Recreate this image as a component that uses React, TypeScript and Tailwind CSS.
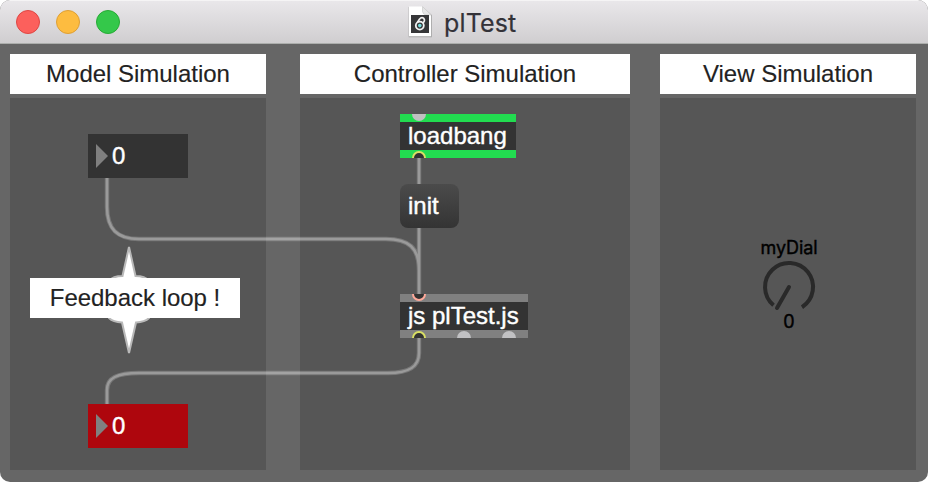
import type { ReactNode } from "react";
import clsx from "clsx";

const trafficLights = [
  "bg-[#fc605c] border-[#de4643]",
  "bg-[#fdbc40] border-[#de9f34]",
  "bg-[#34c84a] border-[#27aa35]",
];

const panels = [
  { title: "Model Simulation", width: "w-64" },
  { title: "Controller Simulation", width: "w-[330px]" },
  { title: "View Simulation", width: "w-64" },
];

// One combined path, so cords that merge don't add up their opacity
const wires = [
  "M107 178V207C107 229 117 239 139 239H386C409 239 419 248 419 270V294",
  "M419 158V184M419 228V294",
  "M419 338V353C419 367 409 373 388 373H139C117 373 107 378 107 390V404",
].join("");

const PatchIcon = () => (
  <svg className="h-8 w-6 shrink-0" viewBox="0 0 24 32" fill="none">
    <path d="M.7 1H15L23.8 9V31.2H.7Z" fill="#a4a4a4" />
    <path d="M1 .5H14.5L23 9V30.3H1Z" fill="#fff" />
    <path d="M14.5 .5V5.5Q15 8.5 18 9H23Z" fill="#e6e6e6" stroke="#c4c4c4" strokeWidth=".6" />
    <path d="M3 9H21V27H3Z" fill="#363638" />
    <circle cx="11.8" cy="19.6" r="4" stroke="#f2f2f2" strokeWidth="1.8" />
    <path d="M9.2 16.6L11.4 13.2Q13.6 10.6 15.8 12.4Q17.6 15 14.6 17" stroke="#f2f2f2" strokeWidth="1.7" />
    <circle cx="11.8" cy="19.6" r="1.8" fill="#77dedf" />
  </svg>
);

const TitleBar = () => (
  <header className="relative flex h-11 items-center border-t border-b border-t-[#f5f4f5] border-b-[#acaeac] bg-linear-to-b from-[#e9e7ea] to-[#d0ced0] pl-4">
    <div className="flex gap-4">
      {trafficLights.map((color) => (
        <span key={color} className={clsx("size-6 rounded-full border", color)} />
      ))}
    </div>
    <div className="absolute inset-x-0 -top-px flex h-11 items-center gap-3 pl-[408px]">
      <PatchIcon />
      <span className="mt-0.5 [font-family:Inter,'Liberation_Sans',sans-serif] text-[25px] leading-none tracking-[0.15px] text-[#333238] [-webkit-text-stroke:0.2px]">
        plTest
      </span>
    </div>
  </header>
);

const Comment = ({ children, className }: { children: ReactNode; className?: string }) => (
  <div
    className={clsx(
      "flex h-10 items-center justify-center bg-white text-2xl tracking-[-0.02px] text-[#222] [-webkit-text-stroke:0.15px]",
      className,
    )}
  >
    {children}
  </div>
);

const NumberBox = ({ className }: { className: string }) => (
  <div className={clsx("absolute left-[88px] flex h-11 w-[100px] items-center gap-1 pl-2", className)}>
    <svg className="h-6 w-3" viewBox="0 0 12 24">
      <path d="M0 0L12 12L0 24Z" fill="#808080" />
    </svg>
    <span>0</span>
  </div>
);

// Half-round connection point sitting on the rim of an object box
const Port = ({ cx, inlet, color, filled }: { cx: number; inlet?: boolean; color: string; filled?: boolean }) => {
  const y = inlet ? 0 : 44;
  const sweep = inlet ? 0 : 1;
  return filled ? (
    <path d={`M${cx - 7} ${y}A7 7 0 0 ${sweep} ${cx + 7} ${y}Z`} fill={color} />
  ) : (
    <path d={`M${cx - 6} ${y}A6 6 0 0 ${sweep} ${cx + 6} ${y}`} fill="#333" stroke={color} strokeWidth="2" />
  );
};

const ObjectBox = ({ className, label, children }: { className: string; label: string; children: ReactNode }) => (
  <div className={clsx("absolute left-[400px] h-11 py-2", className)}>
    <div className="flex h-7 items-center bg-[#333] pl-2 whitespace-nowrap">{label}</div>
    <svg className="absolute inset-0 h-11 w-full">{children}</svg>
  </div>
);

const Wires = () => (
  <svg className="absolute inset-0 h-full w-full" viewBox="0 0 928 482" fill="none">
    <path d={wires} stroke="#fff" strokeOpacity=".2" strokeWidth="4.5" />
    <path d={wires} stroke="#fff" strokeOpacity=".26" strokeWidth="2.5" />
  </svg>
);

const FeedbackMarker = () => (
  <svg className="absolute top-[245px] left-[99px] h-[110px] w-[60px]" viewBox="0 0 60 110">
    <path
      d="M30 2L36.5 31Q46 31 50 36V73Q46 77 37 77.5L30 108L23 77.5Q14 77 10 73V36Q14 31 23.5 31Z"
      fill="#fff"
      stroke="#b9b9b9"
      strokeWidth="2"
    />
  </svg>
);

const Dial = () => (
  <div className="absolute top-[238px] left-[749px] flex w-20 flex-col items-center [font-family:Inter,'Liberation_Sans',sans-serif] text-lg leading-5 text-black [-webkit-text-stroke:0.4px]">
    <span className="tracking-[-0.1px]">myDial</span>
    <svg className="mt-px h-[54px] w-14" viewBox="0 0 56 54" fill="none" stroke="#292929" strokeWidth="4">
      <path d="M12.5 46.3A24 24 0 1 1 41 48.2" />
      <path d="M28 28L16 49" strokeLinecap="round" />
    </svg>
    <span className="-mt-px">0</span>
  </div>
);

export default function App() {
  return (
    <div className="h-[482px] w-[928px] bg-white">
      <div className="relative h-full w-full overflow-hidden rounded-[10px] bg-[#666] [font-family:'Liberation_Sans',Arial,sans-serif] text-2xl text-white [-webkit-text-stroke:0.4px]">
        <TitleBar />
        <main className="flex pt-2.5 pl-2.5">
          {panels.map((panel, index) => (
            <section
              key={panel.title}
              className={clsx("flex flex-col gap-1", panel.width, index === 1 && "ml-[34px]", index === 2 && "ml-[30px]")}
            >
              <Comment>{panel.title}</Comment>
              <div className="h-[372px] bg-[#565656]" />
            </section>
          ))}
        </main>

        <Wires />
        <NumberBox className="top-[134px] bg-[#333]" />
        <NumberBox className="top-[404px] bg-[#ae060d]" />
        <FeedbackMarker />
        <Comment className="absolute top-[278px] left-[30px] w-[210px]">Feedback loop !</Comment>

        <ObjectBox className="top-[114px] w-[116px] bg-[#22dc50]" label="loadbang">
          <Port cx={19} inlet filled color="#c1c1c2" />
          <Port cx={19} color="#d9df64" />
        </ObjectBox>
        <div className="absolute top-[184px] left-[400px] flex h-11 w-[59px] items-center rounded-lg bg-linear-to-b from-[#4b4b4b] to-[#343434] pl-2">
          init
        </div>
        <ObjectBox className="top-[294px] w-32 bg-[#808080]" label="js plTest.js">
          <Port cx={19} inlet color="#ffa99a" />
          <Port cx={19} color="#d9df64" />
          <Port cx={64} filled color="#c1c1c3" />
          <Port cx={109} filled color="#c1c1c3" />
        </ObjectBox>

        <Dial />
      </div>
    </div>
  );
}
